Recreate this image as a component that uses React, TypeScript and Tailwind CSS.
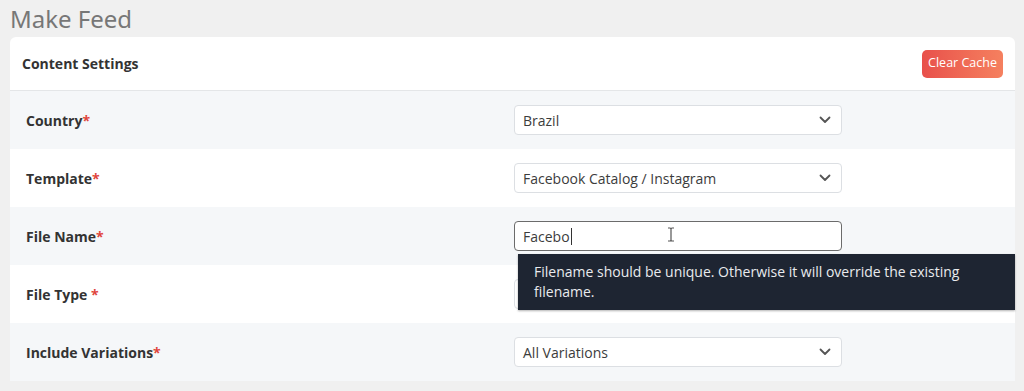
import React from "react";

const font = { fontFamily: '"Open Sans", "Noto Sans", sans-serif' };

function Chevron() {
  return (
    <svg width="12" height="8" viewBox="0 0 12 8" className="absolute right-[10px] top-1/2 -translate-y-1/2">
      <path d="M1.5 1.5 L6 6 L10.5 1.5" fill="none" stroke="#555" strokeWidth="1.8" strokeLinecap="round" strokeLinejoin="round" />
    </svg>
  );
}

function Select({ value }: { value: string }) {
  return (
    <div className="relative w-[328px] h-[30px] bg-white border border-[#dcdfe3] rounded-[4px] flex items-center pl-[8px] text-[14px] text-[#3c3c3c]">
      {value}
      <Chevron />
    </div>
  );
}

function Label({ text, space }: { text: string; space?: boolean }) {
  return (
    <div className="w-[504px] pl-[16px] text-[14px] font-bold text-[#333]">
      {text}
      {space ? " " : ""}
      <span className="text-[#e0453c]">*</span>
    </div>
  );
}

export default function App() {
  return (
    <div className="w-[1024px] h-[391px] bg-[#f0f0f0] px-[10px] overflow-hidden" style={font}>
      <div className="h-[37px] flex items-center text-[24px] text-[#777] leading-none pt-[1px]" style={{ fontFamily: '"Noto Sans", "Open Sans", sans-serif' }}>
        Make Feed
      </div>
      <div className="w-[1005px] bg-white rounded-t-[6px]">
        <div className="h-[54px] border-b border-[#e4e6e8] flex items-center justify-between pl-[12px] pr-[12px]">
          <div className="text-[14px] font-bold text-[#333]">Content Settings</div>
          <button className="h-[28px] w-[81px] rounded-[5px] text-[12.5px] text-white bg-gradient-to-r from-[#e8504b] to-[#f5805f]">
            Clear Cache
          </button>
        </div>
        <div className="h-[58px] bg-[#f5f7f9] flex items-center">
          <Label text="Country" />
          <Select value="Brazil" />
        </div>
        <div className="h-[58px] bg-white flex items-center">
          <Label text="Template" />
          <Select value="Facebook Catalog / Instagram" />
        </div>
        <div className="h-[58px] bg-[#f5f7f9] flex items-center relative z-10">
          <Label text="File Name" />
          <div className="relative w-[328px] h-[30px] bg-white border border-[#6b6b6b] rounded-[4px] flex items-center pl-[8px] text-[14px] text-[#3c3c3c]">
            Facebo
            <span className="inline-block w-[1px] h-[17px] bg-[#333] ml-[1px]" />
            <svg width="8" height="15" viewBox="0 0 8 15" className="absolute left-[152px] top-[5px]">
              <path d="M1 1 H3 Q4 1 4 2 V13 Q4 14 3 14 H1 M7 1 H5 Q4 1 4 2 M4 13 Q4 14 5 14 H7" fill="none" stroke="#555" strokeWidth="1.2" />
            </svg>
            <div className="absolute left-[3px] top-[32px] w-[497px] h-[56px] bg-[#1e2532] text-[#e9ebee] text-[14px] leading-[20px] pl-[16px] pr-[12px] pt-[8px] shadow-[0_1px_2px_rgba(0,0,0,0.3)]">
              Filename should be unique. Otherwise it will override the existing filename.
            </div>
          </div>
        </div>
        <div className="h-[58px] bg-white flex items-center">
          <Label text="File Type" space />
          <Select value="" />
        </div>
        <div className="h-[58px] bg-[#f5f7f9] flex items-center">
          <Label text="Include Variations" />
          <Select value="All Variations" />
        </div>
      </div>
    </div>
  );
}
